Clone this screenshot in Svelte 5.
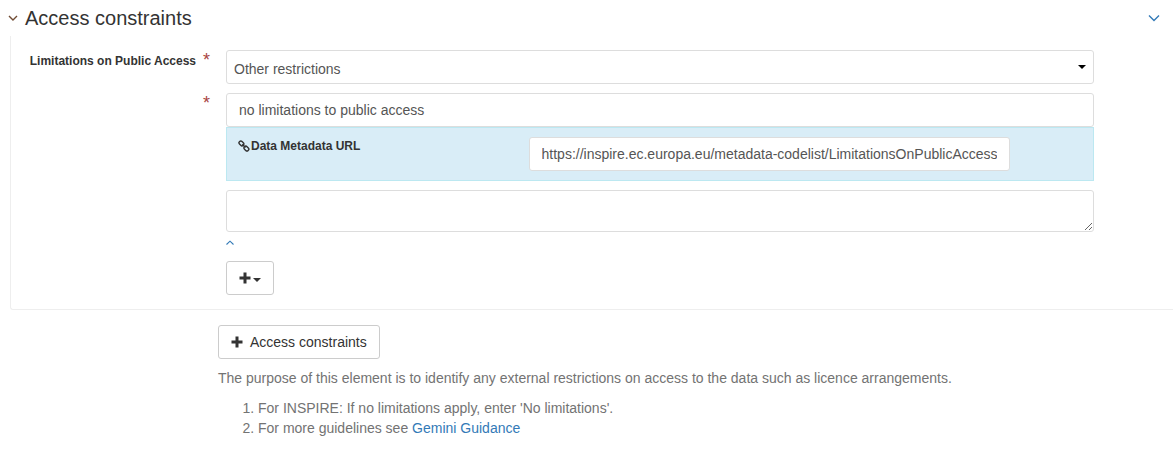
<script>
  let restriction = $state('other');
  let limitation = $state('no limitations to public access');
  let url = $state('https://inspire.ec.europa.eu/metadata-codelist/LimitationsOnPublicAccess/noLimitations');
  let note = $state('');
</script>

<main>
  <fieldset>
    <legend>
      <button type="button" class="fold" aria-label="Collapse section">
        <svg width="10" height="6" viewBox="0 0 10 6"><path d="M1 1l4 4 4-4" /></svg>
      </button>
      <span>Access constraints</span>
      <a class="more" href="#more" aria-label="Show more">
        <svg width="12" height="8" viewBox="0 0 12 8"><path d="M1 1.5l5 5 5-5" /></svg>
      </a>
    </legend>

    <div class="panel">
      <div class="row">
        <label for="restriction">Limitations on Public Access</label>
        <span class="required">*</span>
        <div class="select">
          <select id="restriction" bind:value={restriction}>
            <option value="other">Other restrictions</option>
          </select>
          <svg class="arrow" width="8" height="4" viewBox="0 0 8 4"><path d="M0 0h8L4 4z" /></svg>
        </div>
      </div>

      <div class="row">
        <span></span>
        <span class="required">*</span>
        <div>
          <input type="text" aria-label="Other restrictions" bind:value={limitation} />
          <div class="attribute">
            <label for="url">
              <svg width="12" height="12" viewBox="0 0 12 12">
                <rect x="-2.6" y="-1.8" width="5.2" height="3.6" rx="1.7" transform="translate(3.4 3.4) rotate(45)" />
                <rect x="-2.6" y="-1.8" width="5.2" height="3.6" rx="1.7" transform="translate(8.4 8.6) rotate(45)" />
                <path d="M4.3 4.3l3.2 3.2" />
              </svg>Data Metadata URL
            </label>
            <input id="url" type="text" bind:value={url} />
          </div>
          <textarea aria-label="Additional text" bind:value={note}></textarea>
          <a class="less" href="#less" aria-label="Show less">
            <svg width="8" height="6" viewBox="0 0 8 6"><path d="M0.5 4.5l3.5-3.3 3.5 3.3" /></svg>
          </a>
          <button type="button" class="btn" aria-label="Add">
            <svg class="plus" width="12" height="12" viewBox="0 0 12 12"><path d="M4.5 0.5h3v4h4v3h-4v4h-3v-4h-4v-3h4z" /></svg>
            <svg class="caret" width="8" height="4" viewBox="0 0 8 4"><path d="M0 0h8L4 4z" /></svg>
          </button>
        </div>
      </div>
    </div>
  </fieldset>

  <section class="footer">
    <button type="button" class="btn add">
      <svg class="plus" width="12" height="12" viewBox="0 0 12 12"><path d="M4.5 0.5h3v4h4v3h-4v4h-3v-4h-4v-3h4z" /></svg>
      Access constraints
    </button>
    <p>The purpose of this element is to identify any external restrictions on access to the data such as licence arrangements.</p>
    <ol>
      <li>For INSPIRE: If no limitations apply, enter 'No limitations'.</li>
      <li>For more guidelines see <a href="#guidance">Gemini Guidance</a></li>
    </ol>
  </section>
</main>

<style>
  :global(body) {
    margin: 0;
    background: #fff;
  }

  main {
    overflow: hidden;
    font: 14px/20px 'Liberation Sans', Arial, sans-serif;
    color: #333;
  }

  main * {
    box-sizing: border-box;
  }

  svg {
    display: block;
    flex: none;
    fill: currentColor;
  }

  .fold svg,
  .more svg,
  .less svg,
  .attribute svg {
    fill: none;
    stroke: currentColor;
    stroke-width: 1.4;
  }

  .less svg {
    stroke-width: 1.1;
  }

  fieldset {
    min-width: 0;
    margin: 0;
    padding: 0;
    border: 0;
  }

  legend {
    display: flex;
    align-items: center;
    gap: 7px;
    width: 100%;
    height: 36px;
    padding: 0 13px 0 8px;
    font-size: 20px;
    line-height: 24px;
  }

  .fold {
    padding: 0;
    border: 0;
    background: none;
    color: #704b33;
  }

  .more {
    margin-left: auto;
  }

  a {
    color: #337ab7;
    text-decoration: none;
  }

  .panel {
    display: grid;
    gap: 9px;
    margin-left: 10px;
    padding: 14px 79px 14px 0;
    border: 1px solid #eee;
    border-width: 0 0 1px 1px;
    border-bottom-left-radius: 3px;
  }

  .row {
    display: grid;
    grid-template-columns: 185px 7px minmax(0, 1fr);
    column-gap: 7px;
  }

  .row > .required + div {
    padding-left: 9px;
  }

  label {
    font-size: 12px;
    font-weight: bold;
    line-height: 20px;
    text-align: right;
    white-space: nowrap;
  }

  .row > label {
    padding-top: 1px;
  }

  .required {
    color: #a94442;
    font-size: 18px;
    line-height: 20px;
  }

  .select {
    display: grid;
    align-items: center;
  }

  .select > * {
    grid-area: 1 / 1;
  }

  .arrow {
    justify-self: end;
    margin-right: 8px;
    color: #000;
    pointer-events: none;
  }

  input,
  select,
  textarea {
    display: block;
    width: 100%;
    height: 34px;
    padding: 6px 12px;
    border: 1px solid #ddd;
    border-radius: 3px;
    background: #fff;
    color: #555;
    font: inherit;
  }

  select {
    appearance: none;
    padding: 8px 7px 6px;
  }

  textarea {
    height: 42px;
    margin-top: 9px;
    resize: vertical;
  }

  .attribute {
    display: grid;
    grid-template-columns: 35fr 58fr 10fr;
    padding: 9px 0 9px 11px;
    border: 1px solid #bce8f1;
    background: #d9edf7;
  }

  .attribute label {
    display: flex;
    align-items: center;
    align-self: start;
    gap: 1px;
    height: 18px;
  }

  .less {
    display: flex;
    align-items: center;
    width: 8px;
    height: 22px;
    margin-bottom: 7px;
  }

  .btn {
    display: flex;
    align-items: center;
    gap: 2px;
    height: 34px;
    padding: 0 12px;
    border: 1px solid #ccc;
    border-radius: 3px;
    background: #fff;
    color: #333;
    font: inherit;
  }

  .caret {
    margin-top: 4px;
  }

  .add {
    gap: 7px;
  }

  .footer {
    padding: 15px 16px 16px 218px;
    color: #737373;
  }

  p {
    margin: 9px 0 10px;
  }

  ol {
    margin: 0;
    padding-left: 40px;
  }
</style>
